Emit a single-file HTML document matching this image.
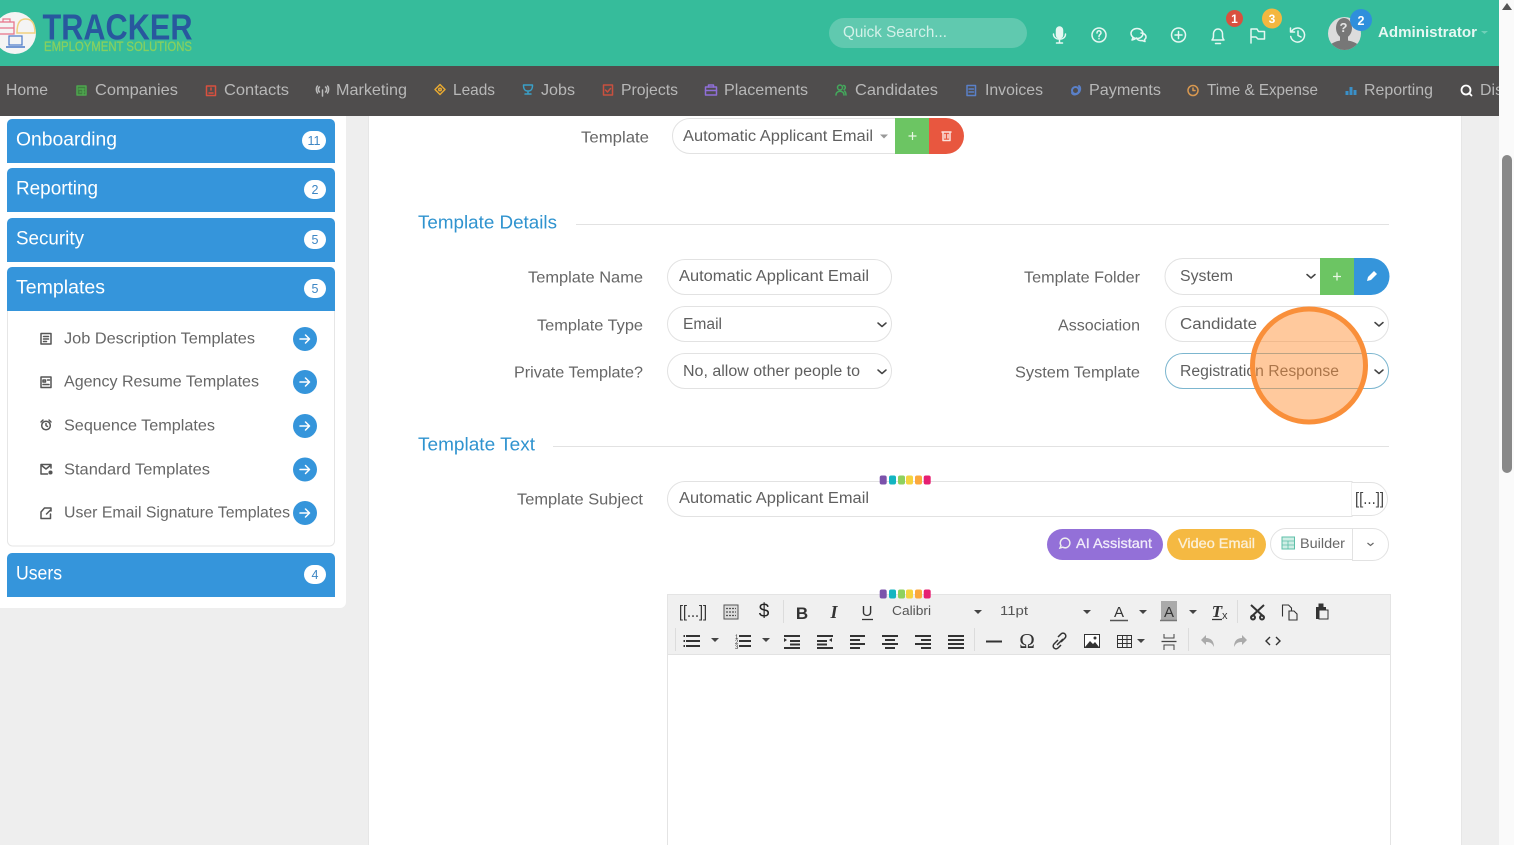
<!DOCTYPE html>
<html><head><meta charset="utf-8"><style>
html,body{margin:0;padding:0;background:#eeeeee;overflow:hidden}
svg{display:block;position:absolute;left:0;top:0}
text{font-family:"Liberation Sans",sans-serif;white-space:pre}
.n{font-size:16px;fill:#b8b8b8}
.l{font-size:16px;fill:#666}
.v{font-size:15.500px;fill:#5f5f5f}
.h{font-size:18.500px;fill:#2f93cf}
.s{font-size:19.500px;fill:#fff}
.m{font-size:16px;fill:#666}
.c{font-size:12.500px;fill:#3d86c4;text-anchor:middle}
.ic{fill:none;stroke-width:1.5;stroke-linecap:round;stroke-linejoin:round}
</style></head><body>
<svg width="1514" height="845" viewBox="0 0 1514 845" xmlns="http://www.w3.org/2000/svg">
<rect width="1514" height="845" fill="#eeeeee"/>
<rect x="1499" width="15" height="845" fill="#fafafa"/>
<path d="M1502 10l5-7 5 7z" fill="#555"/>
<rect x="1502" y="155" width="10" height="318" rx="5" fill="#888"/>

<!-- panels -->
<rect x="-10" y="100" width="356" height="508" rx="6" fill="#fff"/>
<rect x="368.500" y="100" width="1093" height="760" fill="#fff" stroke="#e6e6e6"/>

<!-- header -->
<rect width="1499" height="66" fill="#36bc9b"/>
<rect y="66" width="1499" height="50" fill="#4f4d4d"/>

<!-- logo -->
<circle cx="15" cy="33" r="21" fill="#f4f4f4"/>
<rect x="-1" y="22" width="15" height="12" fill="none" stroke="#e8758c" stroke-width="1.300"/>
<path d="M3 22v-3h7v3M-1 28h15" fill="none" stroke="#e8758c" stroke-width="1.200"/>
<path d="M17 33c0-12 4-14 9-14s9 3 9 14z" fill="none" stroke="#f0d080" stroke-width="1.500"/>
<rect x="9" y="36" width="13" height="9" fill="none" stroke="#4a78c8" stroke-width="1.200"/>
<path d="M6 47h19" stroke="#4a78c8" stroke-width="1.500"/>
<text x="42.500" y="39.500" textLength="150" lengthAdjust="spacingAndGlyphs" style="font-size:36px;font-weight:700;fill:#28589e">TRACKER</text>
<text x="44" y="51" textLength="148" lengthAdjust="spacingAndGlyphs" style="font-size:13.500px;fill:#86d060;stroke:#86d060;stroke-width:.3">EMPLOYMENT SOLUTIONS</text>

<!-- search -->
<rect x="829" y="18" width="198" height="30" rx="15" fill="#60c9af"/>
<text x="843" y="37" textLength="104" lengthAdjust="spacingAndGlyphs" style="font-size:15.500px;fill:#d3f1e9">Quick Search...</text>

<!-- header icons -->
<g class="ic" stroke="#e6f7f2">
<rect x="1056.500" y="27" width="6" height="11" rx="3" fill="#e6f7f2"/><path d="M1053.500 34c0 7 12 7 12 0M1059.500 39v4M1056.500 43h6"/>
<circle cx="1099" cy="35" r="7"/><path d="M1097 33c0-3 4-3 4 0 0 1.500-2 1.500-2 3.500M1099 38.500v.2"/>
<ellipse cx="1137" cy="33.500" rx="6" ry="5"/><path d="M1133 37.500l-1 2.500 3-1"/><path d="M1141 33c3 0 5 2 5 4 0 1-.5 2-1.500 2.500l.5 2-3-1c-3 .5-5-1-5.500-2.500"/>
<circle cx="1178.500" cy="35" r="7"/><path d="M1175 35h7M1178.500 31.500v7"/>
<path d="M1212 40c1.500-1.500 1.500-3 1.500-6 0-3 2-5 4.500-5s4.500 2 4.500 5c0 3 0 4.500 1.500 6zM1215.500 43.500h5"/>
<path d="M1251 43V29h6l1.500 2.500h6V39h-6.500L1256 37h-5"/>
<path d="M1291.500 31.500a7 7 0 1 1-.8 5M1290.500 28v4h4M1298 31v4.500l3 1.500"/>
</g>
<circle cx="1234.500" cy="18.500" r="8.500" fill="#d9503f"/><text x="1234.500" y="23" text-anchor="middle" style="font-size:12px;font-weight:700;fill:#fff">1</text>
<circle cx="1272" cy="18.500" r="10" fill="#f4b740"/><text x="1272" y="23" text-anchor="middle" style="font-size:12px;font-weight:700;fill:#fff">3</text>
<clipPath id="av"><circle cx="1344.500" cy="33.500" r="16.500"/></clipPath>
<circle cx="1344.500" cy="33.500" r="16.500" fill="#dcdcdc"/>
<g clip-path="url(#av)" fill="#777">
<ellipse cx="1344" cy="28" rx="8" ry="10"/>
<rect x="1340" y="34" width="8" height="8"/>
<path d="M1328 52c0-8 6-11 16-12 10 1 17 4 17 12z"/>
</g>
<text x="1343.500" y="32" text-anchor="middle" style="font-size:13px;font-weight:700;fill:#e4e4e4">?</text>
<circle cx="1361" cy="20" r="11" fill="#2f8fdc"/><text x="1361" y="25" text-anchor="middle" style="font-size:12.500px;font-weight:700;fill:#fff">2</text>
<text x="1378" y="37" textLength="99" lengthAdjust="spacingAndGlyphs" style="font-size:15px;font-weight:700;fill:#e6f7f2">Administrator</text>
<path d="M1481 31h7l-3.500 3z" fill="#6fd0b8"/>

<!-- nav -->
<text class="n" x="6" y="95" textLength="42" lengthAdjust="spacingAndGlyphs">Home</text>
<text class="n" x="95" y="95" textLength="83" lengthAdjust="spacingAndGlyphs">Companies</text>
<text class="n" x="224" y="95" textLength="65" lengthAdjust="spacingAndGlyphs">Contacts</text>
<text class="n" x="336" y="95" textLength="71" lengthAdjust="spacingAndGlyphs">Marketing</text>
<text class="n" x="453" y="95" textLength="42" lengthAdjust="spacingAndGlyphs">Leads</text>
<text class="n" x="541" y="95" textLength="34" lengthAdjust="spacingAndGlyphs">Jobs</text>
<text class="n" x="621" y="95" textLength="57" lengthAdjust="spacingAndGlyphs">Projects</text>
<text class="n" x="724" y="95" textLength="84" lengthAdjust="spacingAndGlyphs">Placements</text>
<text class="n" x="855" y="95" textLength="83" lengthAdjust="spacingAndGlyphs">Candidates</text>
<text class="n" x="985" y="95" textLength="58" lengthAdjust="spacingAndGlyphs">Invoices</text>
<text class="n" x="1089" y="95" textLength="72" lengthAdjust="spacingAndGlyphs">Payments</text>
<text class="n" x="1207" y="95" textLength="111" lengthAdjust="spacingAndGlyphs">Time &amp; Expense</text>
<text class="n" x="1364" y="95" textLength="69" lengthAdjust="spacingAndGlyphs">Reporting</text>
<svg x="1470" y="66" width="29" height="50"><text class="n" x="10" y="29">Dis</text></svg>
<g class="ic" stroke-width="1.300">
<g stroke="#4fa64f"><rect x="77" y="86" width="9" height="9" fill="#3f7f3f"/><path d="M79 89h5M80 92h1M83 92h1M83 89v6"/></g>
<g stroke="#d9503f"><rect x="206.500" y="86" width="9" height="9.500"/><path d="M209 93h4M211 88v2"/></g>
<g stroke="#bbb"><path d="M323 90v6M320 87c-1.500 1-1.500 4 0 5M326 87c1.500 1 1.500 4 0 5M318 86c-1.500 1.500-1.500 5 0 7M328 86c1.500 1.500 1.500 5 0 7" transform="translate(-.5 0)"/></g>
<g stroke="#e6a832"><path d="M440 84.500l5 5-5 5-5-5z"/><circle cx="440" cy="89.500" r="1.300"/></g>
<g stroke="#3aa0c8"><path d="M523.500 85h9c0 4-1 6-4.500 6s-4.500-2-4.500-6zM525 94h6M528 91v3"/></g>
<g stroke="#c9503f"><rect x="603.500" y="85" width="9" height="10"/><path d="M605.500 90l2 2 3-3.500"/></g>
<g stroke="#8f6fd8"><rect x="705.500" y="87" width="11" height="8"/><path d="M708.500 87v-2h5v2M705.500 90.500h11"/></g>
<g stroke="#44a85c"><circle cx="840" cy="87.500" r="2.500"/><path d="M836 95c0-5 8-5 8 0M843.500 85.500c2 0 2.500 3 .5 4M846 95c0-2-.5-3-1.500-4"/></g>
<g stroke="#5a80c8"><rect x="967" y="85.500" width="8.500" height="10"/><path d="M969 89h4.500M969 92h4.500"/></g>
<g stroke="#5a80c8" stroke-width="2"><circle cx="1075.500" cy="90.500" r="3.500"/><path d="M1072 93c2 3 7 1 8-3 .5-2-.5-3.500-1-4"/></g>
<g stroke="#d89850"><circle cx="1193" cy="90.500" r="5"/><path d="M1193 88v2.500h2"/></g>
<g stroke="#3a90c8" stroke-width="3" stroke-linecap="butt"><path d="M1347 95v-4M1351 95v-8M1355 95v-5"/></g>
<g stroke="#fff" stroke-width="1.800"><circle cx="1466" cy="90" r="4.500"/><path d="M1469.500 93.500l2 2"/></g>
</g>

<!-- sidebar -->
<path d="M7 163v-39a5 5 0 0 1 5-5h318a5 5 0 0 1 5 5v39z" fill="#3595db"/>
<path d="M7 212v-39a5 5 0 0 1 5-5h318a5 5 0 0 1 5 5v39z" fill="#3595db"/>
<path d="M7 262v-39a5 5 0 0 1 5-5h318a5 5 0 0 1 5 5v39z" fill="#3595db"/>
<path d="M7 311v-39a5 5 0 0 1 5-5h318a5 5 0 0 1 5 5v39z" fill="#3595db"/>
<path d="M7 597v-39a5 5 0 0 1 5-5h318a5 5 0 0 1 5 5v39z" fill="#3595db"/>
<path d="M7.500 311v230a5 5 0 0 0 5 5h317a5 5 0 0 0 5-5v-230" fill="#fff" stroke="#e6e6e6"/>
<text class="s" x="16" y="145.500" textLength="101" lengthAdjust="spacingAndGlyphs">Onboarding</text>
<text class="s" x="16" y="194.500" textLength="82" lengthAdjust="spacingAndGlyphs">Reporting</text>
<text class="s" x="16" y="244.500" textLength="68" lengthAdjust="spacingAndGlyphs">Security</text>
<text class="s" x="16" y="293.500" textLength="89" lengthAdjust="spacingAndGlyphs">Templates</text>
<text class="s" x="16" y="579.500" textLength="46" lengthAdjust="spacingAndGlyphs">Users</text>
<rect x="302" y="131" width="24" height="19" rx="9.500" fill="#fff"/><text class="c" x="314" y="145">11</text>
<rect x="304" y="180" width="22" height="19" rx="9.500" fill="#fff"/><text class="c" x="315" y="194">2</text>
<rect x="304" y="230" width="22" height="19" rx="9.500" fill="#fff"/><text class="c" x="315" y="244">5</text>
<rect x="304" y="279" width="22" height="19" rx="9.500" fill="#fff"/><text class="c" x="315" y="293">5</text>
<rect x="304" y="565" width="22" height="19" rx="9.500" fill="#fff"/><text class="c" x="315" y="579">4</text>

<text class="m" x="64" y="343.500" textLength="191" lengthAdjust="spacingAndGlyphs">Job Description Templates</text>
<text class="m" x="64" y="386.500" textLength="195" lengthAdjust="spacingAndGlyphs">Agency Resume Templates</text>
<text class="m" x="64" y="430.500" textLength="151" lengthAdjust="spacingAndGlyphs">Sequence Templates</text>
<text class="m" x="64" y="474.500" textLength="146" lengthAdjust="spacingAndGlyphs">Standard Templates</text>
<text class="m" x="64" y="517.500" textLength="226" lengthAdjust="spacingAndGlyphs">User Email Signature Templates</text>
<g class="ic" stroke="#555" stroke-width="1.200">
<rect x="41" y="333.500" width="10" height="10.500"/><path d="M43.500 336.500h5M43.500 339h5M43.500 341.500h3"/>
<rect x="41" y="377" width="10" height="10.500"/><path d="M43 380h2.500v2H43zM43 384.500h6M47.500 380h2"/>
<circle cx="46" cy="425.500" r="4.300"/><path d="M46 423.500v2l1.500 1M41 422l2-2M51 422l-2-2"/>
<path d="M51 468v-3.500H41V474h6.500M41 465l5 4 5-4"/><circle cx="50.500" cy="472.500" r="1.300" fill="#555"/>
<path d="M41 512l3.500-4H51v3M41 512v6.500h9.500V514M46.500 514l4-4"/>
</g>
<g>
<circle cx="305" cy="339" r="12" fill="#3595db"/><circle cx="305" cy="382" r="12" fill="#3595db"/><circle cx="305" cy="426" r="12" fill="#3595db"/><circle cx="305" cy="469.500" r="12" fill="#3595db"/><circle cx="305" cy="513" r="12" fill="#3595db"/>
</g>
<g class="ic" stroke="#fff" stroke-width="1.100">
<path d="M300 339h9.500M305.500 335l4 4-4 4"/><path d="M300 382h9.500M305.500 378l4 4-4 4"/><path d="M300 426h9.500M305.500 422l4 4-4 4"/><path d="M300 469.500h9.500M305.500 465.500l4 4-4 4"/><path d="M300 513h9.500M305.500 509l4 4-4 4"/>
</g>

<!-- form top -->
<text class="l" x="581" y="142.500" textLength="68" lengthAdjust="spacingAndGlyphs">Template</text>
<path d="M895 118.500h-205a17 17 0 0 0 0 35h205" fill="#fff" stroke="#e2e2e2"/>
<text class="v" x="683" y="141" textLength="190" lengthAdjust="spacingAndGlyphs">Automatic Applicant Email</text>
<path d="M880 134.500h8l-4 4z" fill="#999"/>
<rect x="895" y="118" width="34" height="36" fill="#6cc563"/>
<path d="M929 118h17a18 18 0 0 1 0 36h-17z" fill="#e8573f"/>
<path d="M908.500 136h8M912.500 132v8" stroke="#e8f7e4" stroke-width="1.200"/>
<g class="ic" stroke="#fbe3dd" stroke-width="1.300"><path d="M942 132h9M943 132v8.500h7V132M945 134.500v3.500M948 134.500v3.500"/></g>

<!-- Template Details -->
<text class="h" x="418" y="228.500" textLength="139" lengthAdjust="spacingAndGlyphs">Template Details</text>
<path d="M576 224.500h813" stroke="#e2e2e2"/>
<text class="l" x="528" y="282.500" textLength="115" lengthAdjust="spacingAndGlyphs">Template Name</text>
<text class="l" x="537" y="330.500" textLength="106" lengthAdjust="spacingAndGlyphs">Template Type</text>
<text class="l" x="514" y="377.500" textLength="129" lengthAdjust="spacingAndGlyphs">Private Template?</text>
<rect x="667.500" y="259.500" width="224" height="35" rx="17.500" fill="#fff" stroke="#e2e2e2"/>
<rect x="667.500" y="306.500" width="224" height="35" rx="17.500" fill="#fff" stroke="#e2e2e2"/>
<rect x="667.500" y="353.500" width="224" height="35" rx="17.500" fill="#fff" stroke="#e2e2e2"/>
<text class="v" x="679" y="281" textLength="190" lengthAdjust="spacingAndGlyphs">Automatic Applicant Email</text>
<text class="v" x="683" y="329" textLength="39" lengthAdjust="spacingAndGlyphs">Email</text>
<text class="v" x="683" y="376" textLength="177" lengthAdjust="spacingAndGlyphs">No, allow other people to</text>

<text class="l" x="1024" y="282.500" textLength="116" lengthAdjust="spacingAndGlyphs">Template Folder</text>
<text class="l" x="1058" y="330.500" textLength="82" lengthAdjust="spacingAndGlyphs">Association</text>
<text class="l" x="1015" y="377.500" textLength="125" lengthAdjust="spacingAndGlyphs">System Template</text>
<path d="M1320 258.500h-137a17.500 17.500 0 0 0 0 36h137" fill="#fff" stroke="#e2e2e2"/>
<rect x="1320" y="258" width="34" height="37" fill="#6cc563"/>
<path d="M1354 258h17a18.500 18.500 0 0 1 0 37h-17z" fill="#3595db"/>
<path d="M1333 276.500h8M1337 272.500v8" stroke="#e8f7e4" stroke-width="1.300"/>
<path d="M1367 281l1-4 6-6 3 3-6 6z" fill="#fff"/>
<text class="v" x="1180" y="281" textLength="53" lengthAdjust="spacingAndGlyphs">System</text>
<rect x="1165.500" y="306.500" width="223" height="35" rx="17.500" fill="#fff" stroke="#e2e2e2"/>
<text class="v" x="1180" y="329" textLength="77" lengthAdjust="spacingAndGlyphs">Candidate</text>
<rect x="1165.500" y="353.500" width="223" height="35" rx="17.500" fill="#fff" stroke="#7cb6cf"/>
<text class="v" x="1180" y="376" textLength="159" lengthAdjust="spacingAndGlyphs">Registration Response</text>
<g class="ic" stroke="#444" stroke-width="2"><path d="M878 323l4 3.500 4-3.500M878 370l4 3.500 4-3.500M1307 274.500l4 3.500 4-3.500M1375 322.500l4 3.500 4-3.500M1375 370l4 3.500 4-3.500"/></g>

<!-- Template Text -->
<text class="h" x="418" y="450.500" textLength="117" lengthAdjust="spacingAndGlyphs">Template Text</text>
<path d="M553 446.500h836" stroke="#e2e2e2"/>
<text class="l" x="517" y="504.500" textLength="126" lengthAdjust="spacingAndGlyphs">Template Subject</text>
<path d="M1352 516.500H685a17.500 17.500 0 0 1 0-35h667z" fill="#fff" stroke="#e2e2e2"/>
<path d="M1352 482.500h19a16.500 16.500 0 0 1 0 33h-19" fill="#fff" stroke="#e2e2e2"/>
<text class="v" x="679" y="503" textLength="190" lengthAdjust="spacingAndGlyphs">Automatic Applicant Email</text>
<text x="1355" y="504" textLength="29" lengthAdjust="spacingAndGlyphs" style="font-size:17px;fill:#444">[[...]]</text>
<g>
<rect x="879.700" y="475.500" width="7" height="9" rx="2" fill="#7b52ab"/><rect x="889" y="475.500" width="7" height="9" rx="2" fill="#13b5c1"/><rect x="898" y="475.500" width="7" height="9" rx="2" fill="#8ed15e"/><rect x="906" y="475.500" width="7" height="9" rx="2" fill="#f5d33f"/><rect x="915" y="475.500" width="7" height="9" rx="2" fill="#fba83c"/><rect x="923.700" y="475.500" width="7" height="9" rx="2" fill="#e61f72"/>
</g>

<!-- buttons -->
<rect x="1047" y="529" width="116" height="31" rx="15.500" fill="#9370d8"/>
<path d="M1060 548l1-2.500a4.800 4.800 0 1 1 1.800 1.700z" fill="none" stroke="#eee" stroke-width="1.500"/>
<text x="1076" y="548" textLength="76" lengthAdjust="spacingAndGlyphs" style="font-size:14px;fill:#f0ebfa">AI Assistant</text>
<text x="1076" y="548" textLength="76" lengthAdjust="spacingAndGlyphs" style="font-size:14px;fill:none;stroke:#f0ebfa;stroke-width:.3">AI Assistant</text>
<rect x="1167" y="529" width="99" height="31" rx="15.500" fill="#f5b942"/>
<text x="1178" y="548" textLength="77" lengthAdjust="spacingAndGlyphs" style="font-size:14px;fill:#fbf0d8;stroke:#fbf0d8;stroke-width:.3">Video Email</text>
<path d="M1352 528.500h-66a15.500 15.500 0 0 0 0 31h66" fill="#fff" stroke="#e2e2e2"/>
<path d="M1352.500 528.500h20a16 16 0 0 1 0 32h-20z" fill="#fff" stroke="#e2e2e2"/>
<rect x="1282" y="537" width="12.500" height="12" fill="#cfeee5" stroke="#5dbfa8"/>
<path d="M1282 541h12.500M1282 545h12.500M1288 541v8" stroke="#5dbfa8" stroke-width=".8"/>
<text x="1300" y="548" textLength="45" lengthAdjust="spacingAndGlyphs" style="font-size:14px;fill:#666">Builder</text>
<path d="M1367.500 543l3 2.500 3-2.500" fill="none" stroke="#666" stroke-width="1.200"/>

<!-- editor -->
<rect x="667.500" y="594.500" width="723" height="270" fill="#fff" stroke="#e4e4e4"/>
<rect x="668" y="595" width="722" height="59" fill="#f0f0f0"/>
<path d="M668 654.500h722" stroke="#e2e2e2"/>
<g>
<rect x="879.700" y="589.500" width="7" height="9" rx="2" fill="#7b52ab"/><rect x="889" y="589.500" width="7" height="9" rx="2" fill="#13b5c1"/><rect x="898" y="589.500" width="7" height="9" rx="2" fill="#8ed15e"/><rect x="906" y="589.500" width="7" height="9" rx="2" fill="#f5d33f"/><rect x="915" y="589.500" width="7" height="9" rx="2" fill="#fba83c"/><rect x="923.700" y="589.500" width="7" height="9" rx="2" fill="#e61f72"/>
</g>
<path d="M783.500 600v23M1237.500 600v23M675.500 628v23M974.500 628v23M1188.500 628v23" stroke="#dcdcdc"/>
<text x="679" y="617" textLength="28" lengthAdjust="spacingAndGlyphs" style="font-size:17px;fill:#333">[[...]]</text>
<rect x="724" y="605" width="14" height="14" fill="#ddd" stroke="#555"/>
<path d="M726 608.500h10M726 612h10M726 615.500h10" stroke="#555" stroke-dasharray="2 1" stroke-width="1.200"/>
<text x="764" y="617" text-anchor="middle" style="font-size:19px;fill:#222">$</text>
<text x="802" y="619" text-anchor="middle" style="font-size:17px;font-weight:700;fill:#333">B</text>
<text x="834" y="618" text-anchor="middle" style="font-size:18px;font-style:italic;font-family:'Liberation Serif',serif;font-weight:700;fill:#333">I</text>
<text x="867" y="616" text-anchor="middle" style="font-size:15px;fill:#333">U</text><path d="M862 619.500h11" stroke="#333" stroke-width="1.300"/>
<text x="892" y="615" textLength="39" lengthAdjust="spacingAndGlyphs" style="font-size:13px;fill:#555">Calibri</text>
<path d="M974 610h8l-4 4zM1083 610h8l-4 4zM1139 610h8l-4 4zM1189 610h8l-4 4z" fill="#444"/>
<text x="1000" y="615" textLength="28" lengthAdjust="spacingAndGlyphs" style="font-size:13px;fill:#555">11pt</text>
<text x="1119" y="617" text-anchor="middle" style="font-size:15px;fill:#333">A</text><path d="M1110 620.500h18" stroke="#555" stroke-width="1.500"/>
<rect x="1161" y="601" width="16" height="20" fill="#aaa"/>
<text x="1169" y="617" text-anchor="middle" style="font-size:15px;fill:#333">A</text><path d="M1160 620.500h17" stroke="#777" stroke-width="1.500"/>
<text x="1217" y="617" text-anchor="middle" style="font-size:17px;font-style:italic;font-family:'Liberation Serif',serif;font-weight:700;fill:#333">T</text>
<text x="1222" y="619" style="font-size:11px;fill:#333">x</text>
<path d="M1212 619.500h10" stroke="#333" stroke-width="1.300"/>
<g fill="none" stroke="#333">
<g stroke-width="2"><path d="M1251 605l13 12M1264 605l-13 12"/><circle cx="1253" cy="617.500" r="2"/><circle cx="1262" cy="617.500" r="2"/></g>
<g stroke-width="1.100"><path d="M1282.500 616.500V605h6l3 3v3M1289 611h5l3 3v6h-8z"/></g>
<path d="M1316 607h10v12h-10z" fill="#333" stroke="none"/><rect x="1319" y="610" width="9" height="9" fill="#f0f0f0" stroke="#333"/><rect x="1319" y="604" width="4" height="3" fill="#333"/>
</g>

<!-- row 2 -->
<g stroke="#333" stroke-width="2" fill="none">
<path d="M686 636h14M686 641h14M686 646h14"/><path d="M683.500 636h1.500M683.500 641h1.500M683.500 646h1.500"/>
<path d="M739 636h12M739 641h12M739 646h12"/>
<path d="M784 636h16M790 641h10M790 644.500h10M784 648h16"/>
<path d="M817 636h16M817 641h10M817 644.500h10M817 648h16"/>
<path d="M850 636h15M850 640h10M850 644h15M850 648h10"/>
<path d="M882 636h16M885 640h10M882 644h16M885 648h10"/>
<path d="M915 636h16M921 640h10M915 644h16M921 648h10"/>
<path d="M948 636h16M948 640h16M948 644h16M948 648h16"/>
<path d="M986 641.500h16"/>
</g>
<text x="735" y="639" style="font-size:6px;fill:#333">1</text><text x="735" y="644" style="font-size:6px;fill:#333">2</text><text x="735" y="649" style="font-size:6px;fill:#333">3</text>
<path d="M711 638h8l-4 4zM762 638h8l-4 4zM1137 639h8l-4 4z" fill="#444"/>
<path d="M784 638v4l3-2zM832 638v4l-3-2z" fill="#333"/>
<text x="1027" y="648" text-anchor="middle" style="font-size:21px;fill:#333;font-family:'Liberation Serif',serif">Ω</text>
<g fill="none" stroke="#333" stroke-width="1.500"><path d="M1058 640l-4 4a2.500 2.500 0 0 0 4 4l3-3M1061 642l4-4a2.500 2.500 0 0 0-4-4l-3 3M1057 645l6-6"/></g>
<rect x="1084.500" y="634.500" width="15" height="13" fill="#fff" stroke="#333"/>
<path d="M1085 647l5-6 3 3 2-2 4 5z" fill="#333"/><circle cx="1095" cy="638" r="1.500" fill="#333"/>
<g fill="none" stroke="#333"><rect x="1117.500" y="635.500" width="14" height="12"/><path d="M1118 639.500h14M1118 643.500h14M1122.500 636v12M1127 636v12"/></g>
<g fill="none" stroke="#444"><path d="M1164 634v4h10v-4M1164 650v-5h10v5"/><path d="M1161.500 641.500h15" stroke-width="1.300"/></g>
<path d="M1201 640l5-5v3c5 0 8 3 8 9-2-4-4-5-8-5v3z" fill="#aaa"/>
<path d="M1247 640l-5-5v3c-5 0-8 3-8 9 2-4 4-5 8-5v3z" fill="#aaa"/>
<path d="M1270 637l-4 4 4 4M1276 637l4 4-4 4" fill="none" stroke="#333" stroke-width="1.400"/>

<!-- highlight -->
<circle cx="1309" cy="365.500" r="56.500" fill="#ff8f33" fill-opacity=".48" stroke="#f98f3a" stroke-width="5"/>
</svg>
</body></html>
